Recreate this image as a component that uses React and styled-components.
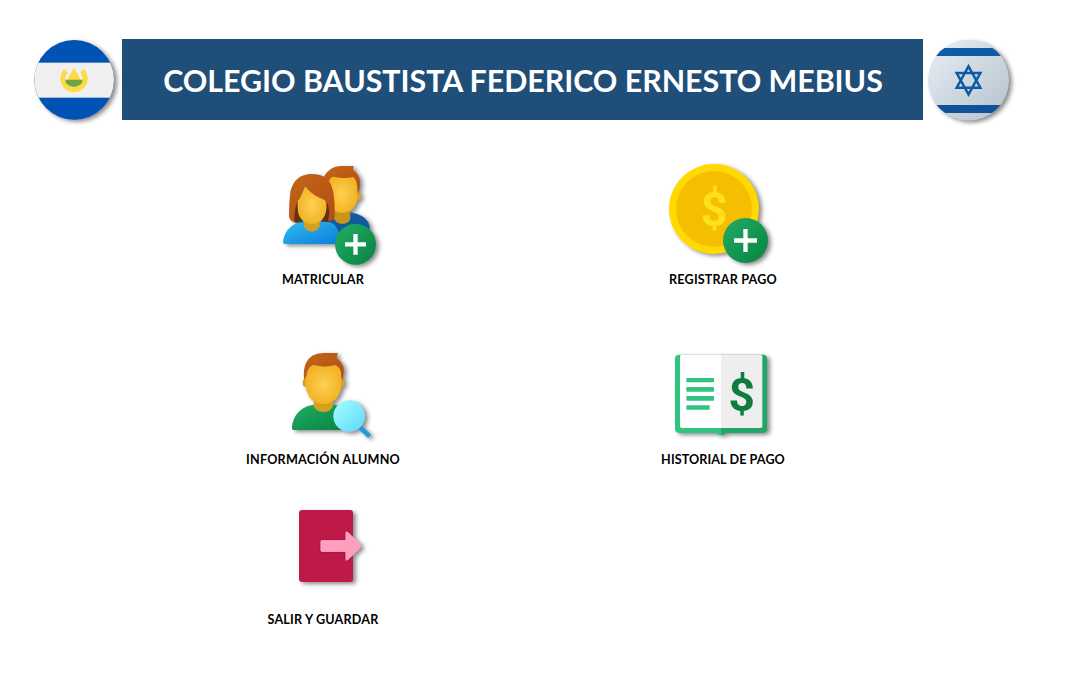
import React from "react";
import styled, { createGlobalStyle } from "styled-components";

const GlobalStyle = createGlobalStyle`
  body {
    margin: 0;
    background: #fff;
    font-family: Lato, "Liberation Sans", sans-serif;
  }
`;

const Page = styled.main`
  width: 1079px;
  height: 675px;
  box-sizing: border-box;
  padding: 30px 0 0 25px;
  overflow: hidden;
`;

const Header = styled.header`
  display: flex;
  align-items: center;
  height: 99px;
`;

const Flag = styled.svg`
  flex: none;
  width: 97px;
  height: 99px;
  filter: drop-shadow(3px 2px 2px rgba(0, 0, 0, 0.45));
`;

const Banner = styled.h1`
  margin: 0;
  width: 801px;
  height: 81px;
  display: flex;
  align-items: center;
  justify-content: center;
  box-sizing: border-box;
  padding-left: 1px;
  background: #1f4e78;
  color: #fff;
  font-size: 30.4px;
  font-weight: 700;
  letter-spacing: -0.03px;
  white-space: nowrap;
`;

const Menu = styled.nav`
  display: grid;
  grid-template-columns: 400px 400px;
  grid-template-rows: 180px 160px 140px;
  margin: 26px 0 0 98px;
`;

const Tile = styled.button`
  display: flex;
  flex-direction: column;
  align-items: center;
  padding: 0;
  border: 0;
  background: none;
  color: #000;
  font-family: inherit;
  cursor: pointer;
`;

const Icon = styled.svg`
  width: 140px;
  height: 115px;
  overflow: visible;
  filter: drop-shadow(3px 2px 2px rgba(0, 0, 0, 0.45));
`;

const Label = styled.span`
  margin-top: 1px;
  font-size: 12.6px;
  font-weight: 700;
  line-height: 18px;
  white-space: nowrap;
  letter-spacing: ${(p) => p.$spacing}px;
`;

const Gradients = () => (
  <defs>
    <linearGradient id="green" x1="0" y1="0" x2="1" y2="1">
      <stop offset="0" stopColor="#21ad64" />
      <stop offset="1" stopColor="#088242" />
    </linearGradient>
    <linearGradient id="blue" x1="0" y1="0" x2="1" y2="1">
      <stop offset="0" stopColor="#33bef0" />
      <stop offset="1" stopColor="#0a7cda" />
    </linearGradient>
    <linearGradient id="hair" x1="0" y1="0" x2="1" y2="1">
      <stop offset="0" stopColor="#c26715" />
      <stop offset="1" stopColor="#b54c18" />
    </linearGradient>
    <radialGradient id="face">
      <stop offset="0" stopColor="#ffcf54" />
      <stop offset="1" stopColor="#f2b425" />
    </radialGradient>
    <linearGradient id="lens" x1="0" y1="0" x2="1" y2="1">
      <stop offset="0" stopColor="#a3ffff" />
      <stop offset="1" stopColor="#5fd7fb" />
    </linearGradient>
    <linearGradient id="silver" x1="0" y1="0" x2="1" y2="1">
      <stop offset="0" stopColor="#e8eff6" />
      <stop offset="1" stopColor="#b5c1cc" />
    </linearGradient>
  </defs>
);

const PlusBadge = ({ x, y, r }) => (
  <g transform={`translate(${x} ${y})`}>
    <circle r={r} fill="url(#green)" />
    <path
      d={`M0 ${-r * 0.51}V${r * 0.51}M${-r * 0.51} 0H${r * 0.51}`}
      stroke="#fff"
      strokeWidth="13"
    />
  </g>
);

const SalvadorFlag = () => (
  <Flag viewBox="0 0 291 297">
    <clipPath id="round-left">
      <circle cx="147.5" cy="149.5" r="119.5" />
    </clipPath>
    <g clipPath="url(#round-left)">
      <rect width="291" height="297" fill="#0052b4" />
      <rect y="98" width="291" height="105" fill="#f0f0f0" />
    </g>
    <path d="M123 122A33.500 33.500 0 1 0 171 122" fill="none" stroke="#ffda44" strokeWidth="15" />
    <path d="M147 114L168 150H126Z" fill="#ffda44" />
    <path d="M121 149H173A26 22 0 0 1 121 149Z" fill="#6da544" />
  </Flag>
);

const IsraelFlag = () => (
  <Flag viewBox="24 0 291 297">
    <clipPath id="round-right">
      <circle cx="160.5" cy="150.5" r="121.5" />
    </clipPath>
    <g clipPath="url(#round-right)">
      <rect x="39" y="29" width="243" height="243" fill="url(#silver)" />
      <rect x="30" y="54" width="262" height="24" fill="#0f5ca5" />
      <rect x="30" y="225" width="262" height="24" fill="#0f529a" />
    </g>
    <path
      d="M160.500 109L196 173H125ZM160.500 193L125 129H196Z"
      fill="none"
      stroke="#0e5ba5"
      strokeWidth="7.500"
    />
  </Flag>
);

const EnrollIcon = () => (
  <Icon viewBox="-51 0 420 345">
    <path d="M164 211Q175 171 236 171Q294 180 299 216V267H164Z" fill="#13599f" />
    <path d="M192 160H241V190Q238 207 216 207Q196 205 192 190Z" fill="#c9941b" />
    <ellipse cx="264" cy="124" rx="8" ry="12" fill="#dfa01e" />
    <path d="M169 79Q168 54 215 62Q260 54 262 85V130Q257 172 217 174Q177 172 169 130Z" fill="url(#face)" />
    <path d="M160 68Q177 35 209 33H251L249 45Q271 58 270 85Q270 105 264 117Q262 72 249 66Q222 73 190 65Q177 65 175 92Z" fill="url(#hair)" />
    <path d="M68 122L68 199Q76 204 93 204H163Q178 204 184 197L182 122Z" fill="#633112" />
    <path d="M39 262Q43 216 91 200Q104 196 126 196Q168 194 191 207Q207 217 212 267H46Q39 267 39 262Z" fill="url(#blue)" />
    <path d="M102 180H149V211Q146 229 126 230Q105 229 102 211Z" fill="#d5a021" />
    <path d="M82 137Q94 128 104 93Q125 119 170 137V159Q165 204 126 207Q86 204 82 159Z" fill="url(#face)" />
    <path d="M57 183Q57 148 60 119C66 73 95 56 128 57C164 58 184 77 190 112Q195 140 194 182Q194 197 174 199Q171 150 165 134Q128 124 105 93Q96 119 84 134Q81 150 79 201Q57 200 57 183Z" fill="url(#hair)" />
    <path d="M74 202Q70 173 82 140Q81 190 99 202ZM171 142Q182 165 174 200H153Q172 189 171 142Z" fill="#633112" />
    <PlusBadge x={256.5} y={268} r={61.5} />
  </Icon>
);

const PaymentIcon = () => (
  <Icon viewBox="-6 0 420 345">
    <circle cx="177" cy="162" r="135" fill="#ffd900" />
    <circle cx="177" cy="162" r="114" fill="#f5be00" />
    <text x="177" y="214" textAnchor="middle" fontFamily="Roboto" fontWeight="700" fontSize="142" fill="#ffe01b">
      $
    </text>
    <PlusBadge x={271.5} y={256.5} r={67.5} />
  </Icon>
);

const StudentIcon = () => (
  <Icon viewBox="54 -15 420 345">
    <path d="M171 263C174 221 204 195 242 194H296Q330 197 340 230V270H178Q170 270 171 263Z" fill="url(#green)" />
    <path d="M236 178H294V197Q289 215 266 216Q241 214 236 197Z" fill="#d7a021" />
    <ellipse cx="211" cy="128" rx="8" ry="12" fill="#dda01e" />
    <ellipse cx="320" cy="128" rx="8" ry="12" fill="#dda01e" />
    <path d="M212 99Q216 76 235 76Q267 83 292 75Q317 76 319 99V137C315 176 291 191 266 192C240 191 215 174 212 137Z" fill="url(#face)" />
    <path d="M208 121Q203 91 213 69Q227 39 265 39H308L305 54Q333 75 325 105L323 121L319 112Q319 80 301 75Q268 84 237 74Q217 77 213 112Z" fill="url(#hair)" />
    <path d="M375 262L404 289" stroke="#1b9de2" strokeWidth="14" />
    <circle cx="342.5" cy="228.5" r="47.5" fill="url(#lens)" />
  </Icon>
);

const HistoryIcon = () => (
  <Icon viewBox="9 -15 420 345">
    <path d="M89 44Q75 45 75 55V268Q76 278 88 279H199Q204 285 213 285V44Z" fill="#30c481" />
    <path d="M213 44H338Q351 45 351 55V268Q350 278 339 279H228Q223 285 213 285Z" fill="#22a667" />
    <path d="M213 44H96Q90 44 90 50V259Q90 264 96 264H213Z" fill="#fff" />
    <path d="M213 44H331Q337 44 337 50V259Q337 264 331 264H213Z" fill="#eee" />
    <g fill="#30c481">
      <rect x="109" y="114" width="83" height="13" rx="2" />
      <rect x="109" y="141" width="83" height="14" rx="2" />
      <rect x="109" y="168" width="83" height="14" rx="2" />
      <rect x="109" y="196" width="70" height="13" rx="2" />
    </g>
    <text x="275" y="212" textAnchor="middle" fontFamily="Roboto" fontWeight="700" fontSize="138" fill="#107c42">
      $
    </text>
  </Icon>
);

const ExitIcon = () => (
  <Icon viewBox="-6 -15 420 345">
    <defs>
      <filter id="halo" x="-20%" y="-20%" width="140%" height="140%">
        <feDropShadow dx="0" dy="0" stdDeviation="4" floodColor="#7d0d31" floodOpacity="0.6" />
      </filter>
      <clipPath id="door">
        <path d="M132 30H294V246H132Z" />
      </clipPath>
    </defs>
    <rect x="132" y="30" width="162" height="216" rx="9" fill="#bd1a48" />
    <g clipPath="url(#door)">
      <path d="M201 121H272V95L319 138L272 182V155H201Q197 155 197 151V125Q197 121 201 121Z" fill="#fd9fbd" filter="url(#halo)" />
    </g>
    <path
      d="M201 121H272V99Q273 92 279 96L317 133Q320 138 317 143L279 180Q273 184 272 177V155H201Q197 155 197 151V125Q197 121 201 121Z"
      fill="#fd9fbd"
    />
  </Icon>
);

const items = [
  { label: "MATRICULAR", Glyph: EnrollIcon, spacing: 0.2 },
  { label: "REGISTRAR PAGO", Glyph: PaymentIcon, spacing: 0.17 },
  { label: "INFORMACIÓN ALUMNO", Glyph: StudentIcon, spacing: 0.23 },
  { label: "HISTORIAL DE PAGO", Glyph: HistoryIcon, spacing: 0.08 },
  { label: "SALIR Y GUARDAR", Glyph: ExitIcon, spacing: 0.17 },
];

export default function App() {
  return (
    <Page>
      <GlobalStyle />
      <Header>
        <SalvadorFlag />
        <Banner>COLEGIO BAUSTISTA FEDERICO ERNESTO MEBIUS</Banner>
        <IsraelFlag />
      </Header>
      <Menu>
        {items.map(({ label, Glyph, spacing }) => (
          <Tile key={label} type="button">
            <Glyph />
            <Label $spacing={spacing}>{label}</Label>
          </Tile>
        ))}
      </Menu>
      <svg width="0" height="0">
        <Gradients />
      </svg>
    </Page>
  );
}
